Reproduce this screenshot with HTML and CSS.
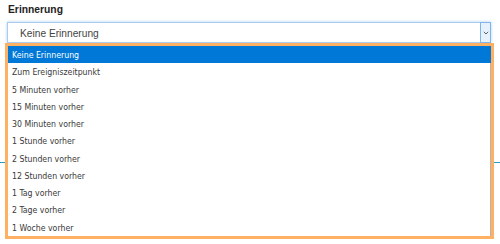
FILE: index.html
```html
<!DOCTYPE html>
<html>
  <head>
    <link rel="stylesheet" href="styles.css">
    <title>Erinnerung</title>
  </head>
  <body>
    <div class="form">
      <label class="field-label">Erinnerung</label>
      <div class="select">
        <span class="select-value">Keine Erinnerung</span>
        <span class="select-arrow">
          <svg width="6" height="4" viewBox="0 0 6 4"><path d="M0.8 0.8 L3 3 L5.2 0.8" fill="none" stroke="#606060" stroke-width="1"/></svg>
        </span>
      </div>
      <div class="rule"></div>

      <div class="dropdown">
        <ul class="dropdown-list">
          <li class="dropdown-item selected">Keine Erinnerung</li>
          <li class="dropdown-item">Zum Ereigniszeitpunkt</li>
          <li class="dropdown-item">5 Minuten vorher</li>
          <li class="dropdown-item">15 Minuten vorher</li>
          <li class="dropdown-item">30 Minuten vorher</li>
          <li class="dropdown-item">1 Stunde vorher</li>
          <li class="dropdown-item">2 Stunden vorher</li>
          <li class="dropdown-item">12 Stunden vorher</li>
          <li class="dropdown-item">1 Tag vorher</li>
          <li class="dropdown-item">2 Tage vorher</li>
          <li class="dropdown-item">1 Woche vorher</li>
        </ul>
      </div>
    </div>
  </body>
</html>
```

FILE: styles.css
```css
* {
  box-sizing: border-box;
}
body {
  margin: 0;
  background-color: #fff;
  font-family: "Liberation Sans", Arial, sans-serif;
}
.form {
  position: relative;
  min-height: 244px;
  padding: 4px 9px 0 7px;
}

.field-label {
  display: block;
  margin-left: 1px;
  font-size: 10.3px;
  font-weight: bold;
  line-height: 12px;
  color: #222;
}

.select {
  display: flex;
  align-items: center;
  height: 21px;
  margin-top: 6px;
  border: 1px solid #a8cbee;
  box-shadow: 0 0 3px rgba(110, 170, 235, 0.55);
  background-color: #fff;
}
.select-value {
  padding-left: 12px;
  padding-top: 1px;
  font-size: 10.2px;
  color: #444;
}
.select-arrow {
  display: flex;
  align-items: center;
  justify-content: center;
  align-self: stretch;
  width: 11px;
  margin: -1px -1px -1px auto;
  border: 1px solid #7fb5ec;
  background-color: #e6f1fc;
}

.rule {
  height: 1px;
  margin: 119px -9px 0 -7px;
  background-color: #2a9cc9;
}

.dropdown {
  position: absolute;
  top: 43px;
  left: 5px;
  width: 489px;
  border: 3px solid #ffb163;
  background-color: #fff;
}
.dropdown-list {
  list-style: none;
  margin: 0;
  padding: 0;
  border-right: 1px solid #b4b4b4;
}
.dropdown-item {
  height: calc(190px / 11);
  padding: 1px 0 0 4px;
  font-family: "DejaVu Sans Condensed", "DejaVu Sans", sans-serif;
  font-size: 8.7px;
  line-height: 16px;
  color: #3a3a3a;
}
.dropdown-item.selected {
  margin-right: -1px;
  background-color: #0078d7;
  color: #fff;
}
```
